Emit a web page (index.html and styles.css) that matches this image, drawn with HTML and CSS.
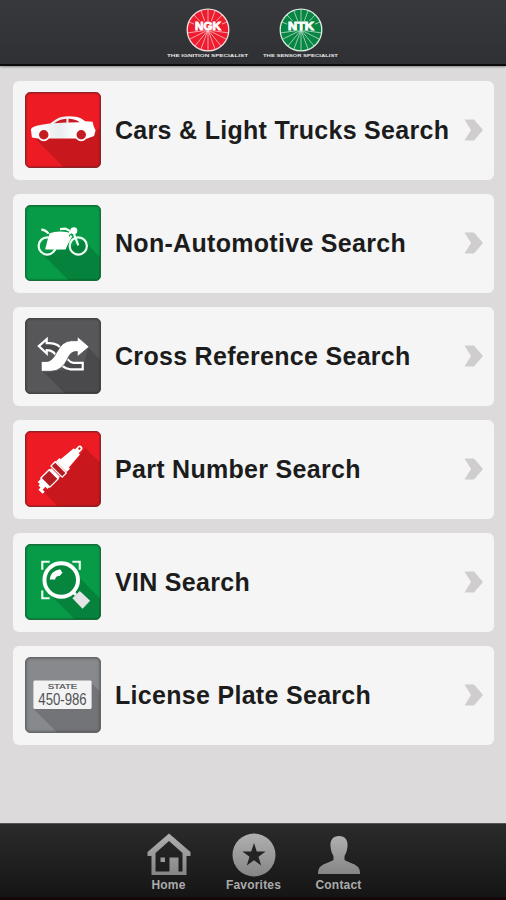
FILE: index.html
```
<!DOCTYPE html>
<html lang="en">

<head>
    <meta charset="UTF-8">
    <meta name="viewport" content="width=device-width, initial-scale=1.0">
    <title>Part Search</title>
    <link rel="stylesheet" href="styles.css">
</head>

<body>
    <!-- shared gradients and shapes -->
    <svg class="defs" width="0" height="0">
        <defs>
            <linearGradient id="metal" x1="0" y1="0" x2="0" y2="1">
                <stop offset="0" stop-color="#b0b0b0" />
                <stop offset="1" stop-color="#858585" />
            </linearGradient>
            <linearGradient id="paint" x1="0" y1="0" x2="1" y2="0">
                <stop offset="0" stop-color="#fff" />
                <stop offset=".45" stop-color="#e9edf0" />
                <stop offset=".7" stop-color="#fff" />
            </linearGradient>
            <g id="rays" stroke="#fff" stroke-opacity=".65" stroke-width=".9">
                <path d="M22 22V2M22 22L29 3M22 22L36 7M22 22L41 14M22 22L43 25M22 22L40 31M22 22L35 38M22 22L29 41M22 22V43M22 22L15 41M22 22L9 38M22 22L4 31M22 22L1 25M22 22L3 14M22 22L8 7M22 22L15 3" />
            </g>
        </defs>
    </svg>

    <div class="app">
        <header class="header">
            <div class="brand">
                <svg width="44" height="44" viewBox="0 0 44 44">
                    <circle cx="22" cy="22" r="20.8" fill="#ed1c2e" />
                    <use href="#rays" />
                    <circle cx="22" cy="22" r="20.8" fill="none" stroke="#f3dede" stroke-width="1.3" />
                    <path d="M8 13h28v9.500H8z" fill="#ed1c2e" />
                    <text class="logo-text" x="22" y="21.700" textLength="26" lengthAdjust="spacingAndGlyphs">NGK</text>
                </svg>
                <svg width="82" height="6" viewBox="0 0 82 6">
                    <text class="tagline" x="0" y="4.500" textLength="81" lengthAdjust="spacingAndGlyphs">THE IGNITION SPECIALIST</text>
                </svg>
            </div>
            <div class="brand">
                <svg width="44" height="44" viewBox="0 0 44 44">
                    <circle cx="22" cy="22" r="20.8" fill="#078643" />
                    <use href="#rays" />
                    <circle cx="22" cy="22" r="20.8" fill="none" stroke="#d9eee0" stroke-width="1.3" />
                    <path d="M8 13h28v9.500H8z" fill="#078643" />
                    <text class="logo-text" x="22" y="21.700" textLength="26" lengthAdjust="spacingAndGlyphs">NTK</text>
                </svg>
                <svg width="76" height="6" viewBox="0 0 76 6">
                    <text class="tagline" x="0" y="4.500" textLength="75" lengthAdjust="spacingAndGlyphs">THE SENSOR SPECIALIST</text>
                </svg>
            </div>
        </header>

        <main class="menu">
            <a class="card">
                <svg class="icon red" viewBox="0 0 75 75">
                    <path class="shade" d="M9 46L38 75H75V36L70 38L60 46z" />
                    <path fill="url(#paint)" d="M5 37Q5.500 34.500 12 33Q20 31.500 24.500 31Q31 25.500 36 24.300Q43 22.800 52 24.300Q56 25.300 60 28.600L67.500 29.200L68.500 33.500L70.500 38L69 43.500L62 46H12L6 45z" />
                    <path fill="#c91c22" d="M28.500 30.700Q34 26.300 41 26V30zM43 26Q50 26 54.500 29.600L43 30z" />
                    <g fill="#c51c22" stroke="#fff" stroke-width="1.800">
                        <circle cx="18" cy="42.300" r="5.700" />
                        <circle cx="56" cy="42.300" r="5.700" />
                    </g>
                </svg>
                <span class="title">Cars &amp; Light Trucks Search</span>
                <svg class="arrow" viewBox="0 0 20 22"><path d="M.5.500H10L19 11L10 21.500H.5L7 11z" /></svg>
            </a>
            <a class="card">
                <svg class="icon green" viewBox="0 0 75 75">
                    <path class="shade" d="M16 48L43 75H75V52L58 34L44 43z" />
                    <g fill="none" stroke="#f2fff5" stroke-width="2.200">
                        <circle cx="21.500" cy="40.500" r="8.700" />
                        <circle cx="53" cy="40.500" r="8.700" />
                        <path d="M47 24L53 40M34.500 23.500L40 23L46 26L40 31M15.500 24Q19.500 24 23 28M20 42.500H39L46 30" />
                    </g>
                    <path fill="#fff" d="M24 27.500Q31 25 42.500 26.500L44.500 33L40 44H19.500L22 34z" />
                    <circle cx="48.500" cy="25" r="3.500" fill="#fff" />
                </svg>
                <span class="title">Non-Automotive Search</span>
                <svg class="arrow" viewBox="0 0 20 22"><path d="M.5.500H10L19 11L10 21.500H.5L7 11z" /></svg>
            </a>
            <a class="card">
                <svg class="icon dark" viewBox="0 0 75 75">
                    <path class="shade" d="M16 52L39 75H75V41L63 29L57 52z" />
                    <path fill="#4a4a4c" stroke="#fff" stroke-width="2.200" d="M13 27.500L21 20.500V24.500Q33 23.500 37 32Q42 43.500 48 44.500H57.500V51H45Q36 50.500 32 40Q29 31.500 21 31.500V35z" />
                    <path fill="#fff" stroke="#444446" stroke-width=".7" d="M15.500 43H22Q27 42 31 34Q37 22 46 22H52V17.800L64 28.200L52 38.200V33Q46 32.500 43 38.500Q37 53 25 53H15.500z" />
                </svg>
                <span class="title">Cross Reference Search</span>
                <svg class="arrow" viewBox="0 0 20 22"><path d="M.5.500H10L19 11L10 21.500H.5L7 11z" /></svg>
            </a>
            <a class="card">
                <svg class="icon red" viewBox="0 0 75 75">
                    <path class="shade" d="M17 60L32 75H75V31L60 16L42 40z" />
                    <g transform="translate(14 57) rotate(-45)">
                        <path fill="#fff" d="M35 -6L53 -4.200V-2.700H56.500Q60 -2.700 60 0Q60 2.700 56.500 2.700H53V4.500L35 6z" />
                        <circle cx="56.800" cy="0" r="1.200" fill="#c51c22" />
                        <path fill="#fff" d="M3 -6H9V6H5V3H1V6H-2V0H1V-3H3z" />
                        <g fill="#b51b20" stroke="#fff" stroke-width="1.300">
                            <path d="M8 -6.500H20V6.500H8z" />
                            <path d="M20 -5.500H22V5.500H20z" fill="#fff" />
                            <path d="M24 -8H30V8H24z" />
                            <path d="M31.500 -7H35V7H31.500z" fill="#fff" />
                        </g>
                    </g>
                </svg>
                <span class="title">Part Number Search</span>
                <svg class="arrow" viewBox="0 0 20 22"><path d="M.5.500H10L19 11L10 21.500H.5L7 11z" /></svg>
            </a>
            <a class="card">
                <svg class="icon green" viewBox="0 0 75 75">
                    <path class="shade" d="M24 50L49 75H75V54L50 29z" />
                    <path fill="none" stroke="#e8fff0" stroke-width="2.200" d="M16.500 25V17H24M47 17H54.500V25M16.500 46V54H24" />
                    <circle cx="35.700" cy="35.500" r="17" fill="#06863c" stroke="#fff" stroke-width="4" />
                    <path fill="#fff" d="M24 35Q25 26 34.500 24.500L37 28L34 31.500Q30 31 29.500 35z" />
                    <path fill="#e4e4e6" d="M54.500 46.500L65 56.500L57.300 64.500L47 54z" />
                    <path stroke="#fff" stroke-width="3" d="M47.500 47.500L50.500 50.500" />
                </svg>
                <span class="title">VIN Search</span>
                <svg class="arrow" viewBox="0 0 20 22"><path d="M.5.500H10L19 11L10 21.500H.5L7 11z" /></svg>
            </a>
            <a class="card">
                <svg class="icon gray" viewBox="0 0 75 75">
                    <path class="shade" d="M8 52L31 75H75V34L66 25z" />
                    <rect x="7.500" y="22.700" width="59" height="29" rx="1.500" fill="#f3f3f3" />
                    <text class="plate-state" x="37" y="31.300" textLength="30" lengthAdjust="spacingAndGlyphs">STATE</text>
                    <text class="plate-number" x="37" y="48" textLength="49" lengthAdjust="spacingAndGlyphs">450-986</text>
                </svg>
                <span class="title">License Plate Search</span>
                <svg class="arrow" viewBox="0 0 20 22"><path d="M.5.500H10L19 11L10 21.500H.5L7 11z" /></svg>
            </a>
        </main>

        <footer class="tabs">
            <a class="tab">
                <svg width="44" height="44" viewBox="0 0 44 44">
                    <path fill="url(#metal)" fill-rule="evenodd" d="M22 .500L43.500 19V23H39.500V42H4.500V23H.5V19zM22 8L8.500 20V38.500H22.500V24.500H31.500V38.500H35.500V20z" />
                    <path fill="#999" d="M13.500 24.500H18V29H13.500z" />
                </svg>
                <span>Home</span>
            </a>
            <a class="tab">
                <svg width="44" height="44" viewBox="0 0 44 44">
                    <circle cx="22" cy="22" r="21.500" fill="url(#metal)" />
                    <path fill="#232323" d="M22 10L24.800 18.500H33.600L26.500 23.700L29.200 32.500L22 27.200L14.800 32.500L17.500 23.700L10.400 18.500H19.200z" />
                </svg>
                <span>Favorites</span>
            </a>
            <a class="tab">
                <svg width="44" height="44" viewBox="0 0 44 44">
                    <path fill="url(#metal)" d="M22 3C28 3 31 7 30.500 13C30 19 28.500 21 27.500 23V27C31 29.500 37 30 41 34Q43 36 43 41H1Q1 36 3 34C7 30 13 29.500 16.500 27V23C15.500 21 14 19 13.500 13C13 7 16 3 22 3z" />
                </svg>
                <span>Contact</span>
            </a>
        </footer>
    </div>
</body>

</html>
```
FILE: styles.css
```
* {
    box-sizing: border-box;
}

body {
    margin: 0;
    font-family: "Liberation Sans", Arial, sans-serif;
    background: #dcdadb;
}

.defs {
    display: block;
}

.app {
    display: flex;
    flex-direction: column;
    height: 900px;
}

.header {
    display: flex;
    justify-content: center;
    gap: 14px;
    height: 66px;
    padding-top: 8px;
    background: linear-gradient(#38393d, #2f3034);
    border-bottom: 2px solid #0c0c0e;
    box-shadow: 0 1px 2px #8a8a8a;
}

.brand {
    display: flex;
    flex-direction: column;
    align-items: center;
}

.logo-text {
    font-size: 11px;
    font-weight: bold;
    text-anchor: middle;
    fill: white;
    stroke: white;
    stroke-width: .9px;
}

.tagline {
    font-size: 4px;
    font-weight: bold;
    fill: #e6e6e6;
}

.menu {
    display: flex;
    flex: 1;
    flex-direction: column;
    gap: 14px;
    padding: 14.5px 12px 0 13px;
}

.card {
    display: flex;
    align-items: center;
    height: 99px;
    padding: 0 10px 0 12px;
    background: #f5f5f5;
    border-radius: 6px;
}

.icon {
    width: 76px;
    height: 76px;
    border: 1px solid;
    border-radius: 5px;
}

.shade {
    fill: black;
    fill-opacity: .15;
}

.red {
    background: #ed1c24;
    border-color: #8c2529;
    box-shadow: inset 0 0 2px #70161a;
}

.green {
    background: #079b47;
    border-color: #1b6b3b;
    box-shadow: inset 0 0 2px #0a4f28;
}

.dark {
    background: #57575a;
    border-color: #444446;
    box-shadow: inset 0 0 2px #2d2d2f;
}

.gray {
    background: #87898c;
    border-color: #66686a;
    box-shadow: inset 0 0 3px #4c4e50;
}

.plate-state {
    font-size: 7px;
    text-anchor: middle;
    fill: #505255;
    stroke: #505255;
    stroke-width: .2px;
}

.plate-number {
    font-size: 17px;
    text-anchor: middle;
    fill: #505255;
}

.title {
    flex: 1;
    margin-left: 14px;
    font-size: 25px;
    font-weight: bold;
    letter-spacing: .3px;
    white-space: nowrap;
    color: #1c1c1c;
}

.arrow {
    width: 20px;
    height: 22px;
    fill: #cfcdce;
}

.tabs {
    display: flex;
    justify-content: center;
    height: 77px;
    padding: 9px 0 0 1px;
    background: linear-gradient(#2b2b2b, #151515);
    border-top: 1px solid #555;
    border-bottom: 3px solid #160509;
}

.tab {
    display: flex;
    flex-direction: column;
    align-items: center;
    width: 85px;
    font-size: 12px;
    font-weight: bold;
    letter-spacing: .2px;
    line-height: 17px;
    color: #ababab;
}
```
